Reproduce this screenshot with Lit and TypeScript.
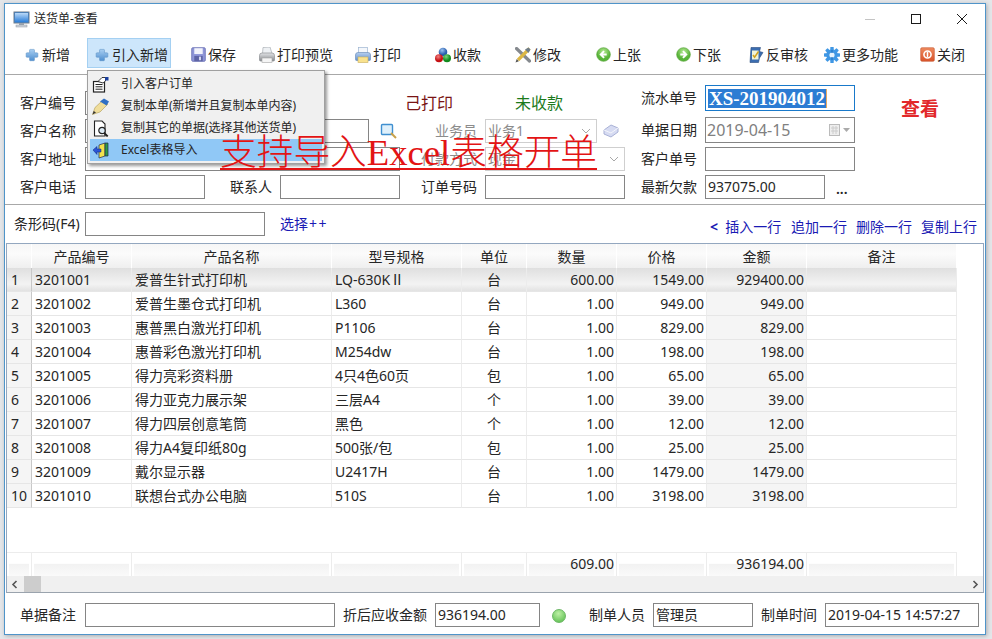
import { LitElement, html, css, svg } from "lit";
import { customElement } from "lit/decorators.js";

const plus = svg`<path d="M5 .8h4a.8.8 0 0 1 .8.8V4.700h3a.9.9 0 0 1 .9.9v3.300a.9.9 0 0 1-.9.9h-3v3.100a.8.8 0 0 1-.8.8H5a.8.8 0 0 1-.8-.8V9.800h-3a.9.9 0 0 1-.9-.9V5.600a.9.9 0 0 1 .9-.9h3V1.600a.8.8 0 0 1 .8-.8z" fill="url(#gb)" stroke="#5b8fc4" stroke-width=".6" transform="translate(1 .8)"/>`;
const icons: Record<string, unknown> = {
  plus,
  save: svg`<rect x=".8" y=".8" width="14.400" height="14.400" rx="1" fill="#8f96d8" stroke="#6f76b8"/><rect x="3.500" y="1.300" width="9" height="6.200" fill="#f2f3fb"/><rect x="3.500" y="9.500" width="9" height="5.700" fill="#5e64a6"/><rect x="8.500" y="10.300" width="2.200" height="3.800" fill="#d5d8f0"/>`,
  preview: svg`<path d="M4 .5l7-.5 2 6.500H3.500z" fill="#eef1f4" stroke="#a8adb3" stroke-width=".7"/><path d="M.5 8.500q0-2.500 2.500-2.500h10q2.500 0 2.500 2.500v4.500q0 1-1 1h-13q-1 0-1-1z" fill="url(#gg)" stroke="#8c8f93" stroke-width=".7"/><rect x="3" y="11" width="10" height="4.500" fill="#f5f5f5" stroke="#a3a3a3" stroke-width=".6"/>`,
  print: svg`<rect x="3.500" y=".5" width="9" height="6.500" fill="#f4f7fb" stroke="#9db4d0" stroke-width=".7"/><path d="M.5 8q0-2.500 2.500-2.500h10q2.500 0 2.500 2.500v4.500q0 1-1 1h-13q-1 0-1-1z" fill="url(#gp)" stroke="#6f90bd" stroke-width=".7"/><rect x="3" y="10" width="10" height="5.500" fill="#f9e28e" stroke="#c9ae5a" stroke-width=".6"/>`,
  balls: svg`<circle cx="8" cy="5" r="4.300" fill="url(#bb)"/><circle cx="4" cy="11.300" r="4" fill="url(#br)"/><circle cx="12" cy="11.300" r="4" fill="url(#bg)"/>`,
  tools: svg`<path d="M1.500 1.500l13 12.500" stroke="#85898e" stroke-width="3.200" stroke-linecap="round"/><path d="M14.500 1.500L3 13" stroke="#dcb744" stroke-width="3.200"/><path d="M.5 15.500l1.200-3.400 2.200 2.200z" fill="#555"/><path d="M10 2.500l3.500-2 2 2-2 3.500z" fill="#6f7d88"/>`,
  up: svg`<circle cx="8" cy="8" r="7.300" fill="url(#gc)" stroke="#5aa53c" stroke-width=".7"/><path d="M8.600 4.300L5 8l3.600 3.700M5.400 8h6" fill="none" stroke="#fff" stroke-width="2"/>`,
  down: svg`<circle cx="8" cy="8" r="7.300" fill="url(#gc)" stroke="#5aa53c" stroke-width=".7"/><path d="M7.400 4.300L11 8l-3.600 3.700M10.600 8h-6" fill="none" stroke="#fff" stroke-width="2"/>`,
  audit: svg`<path d="M3 .5h9.500l-1 4 3.500 1-3.500 5.500-1 4.500H2z" fill="#3b6db0" stroke="#27497e" stroke-width=".6"/><rect x="4" y="3.500" width="6.500" height="9" fill="#f1f4d8"/><path d="M5 8l1.600 2.200L10.500 4.500" fill="none" stroke="#d2a21e" stroke-width="1.500"/>`,
  gear: svg`<g fill="#3f97e4"><circle cx="8" cy="8" r="5.800"/><rect x="6.300" y="0" width="3.400" height="16" rx=".6"/><rect x="0" y="6.300" width="16" height="3.400" rx=".6"/><rect x="6.300" y="0" width="3.400" height="16" rx=".6" transform="rotate(45 8 8)"/><rect x="6.300" y="0" width="3.400" height="16" rx=".6" transform="rotate(-45 8 8)"/></g><circle cx="8" cy="8" r="2.600" fill="#e6f3fd"/><path d="M8 3v3M8 10v3" stroke="#1d6fbd" stroke-width="1"/>`,
  close: svg`<rect x=".7" y=".7" width="14.600" height="14.600" rx="1.500" fill="url(#go)" stroke="#c4552e" stroke-width=".6"/><circle cx="8" cy="8" r="3.800" fill="none" stroke="#fff" stroke-width="1.700"/><rect x="7.200" y="5" width="1.600" height="6" rx=".8" fill="#fff"/>`,
};
const defs = svg`<defs>
<linearGradient id="gb" x1="0" y1="0" x2="0" y2="1"><stop offset="0" stop-color="#a9cff2"/><stop offset="1" stop-color="#4f8fd0"/></linearGradient>
<linearGradient id="gg" x1="0" y1="0" x2="0" y2="1"><stop offset="0" stop-color="#e2e4e6"/><stop offset="1" stop-color="#85888c"/></linearGradient>
<linearGradient id="gp" x1="0" y1="0" x2="0" y2="1"><stop offset="0" stop-color="#b8d0ef"/><stop offset="1" stop-color="#5f8fcf"/></linearGradient>
<radialGradient id="bb" cx=".4" cy=".3"><stop offset="0" stop-color="#9cc2f0"/><stop offset="1" stop-color="#2a5fae"/></radialGradient>
<radialGradient id="br" cx=".4" cy=".3"><stop offset="0" stop-color="#f08080"/><stop offset="1" stop-color="#c40f12"/></radialGradient>
<radialGradient id="bg" cx=".4" cy=".3"><stop offset="0" stop-color="#7fd67f"/><stop offset="1" stop-color="#128a1e"/></radialGradient>
<radialGradient id="gc" cx=".5" cy=".3"><stop offset="0" stop-color="#b5ea93"/><stop offset="1" stop-color="#57b338"/></radialGradient>
<linearGradient id="go" x1="0" y1="0" x2="0" y2="1"><stop offset="0" stop-color="#ee8a5e"/><stop offset="1" stop-color="#d9532a"/></linearGradient>
<linearGradient id="ml" x1="0" y1="0" x2="0" y2="1"><stop offset="0" stop-color="#b9d8f8"/><stop offset="1" stop-color="#2d7fd8"/></linearGradient>
</defs>`;

const tools = [
  { t: "新增", i: "plus", w: 71, sz: 14 },
  { t: "引入新增", i: "plus", w: 84, m: 11, hot: true, sz: 14 },
  { t: "保存", i: "save", w: 69, sz: 15 },
  { t: "打印预览", i: "preview", w: 96, sz: 16 },
  { t: "打印", i: "print", w: 80, sz: 16 },
  { t: "收款", i: "balls", w: 80, sz: 16 },
  { t: "修改", i: "tools", w: 80, sz: 16 },
  { t: "上张", i: "up", w: 80, sz: 15 },
  { t: "下张", i: "down", w: 73, sz: 15 },
  { t: "反审核", i: "audit", w: 76, sz: 16 },
  { t: "更多功能", i: "gear", w: 95, sz: 16 },
  { t: "关闭", i: "close", w: 60, sz: 15 },
];
const cols = ["产品编号", "产品名称", "型号规格", "单位", "数量", "价格", "金额", "备注"];
const rows = [
  ["3201001", "爱普生针式打印机", "LQ-630KⅡ", "台", "600.00", "1549.00", "929400.00"],
  ["3201002", "爱普生墨仓式打印机", "L360", "台", "1.00", "949.00", "949.00"],
  ["3201003", "惠普黑白激光打印机", "P1106", "台", "1.00", "829.00", "829.00"],
  ["3201004", "惠普彩色激光打印机", "M254dw", "台", "1.00", "198.00", "198.00"],
  ["3201005", "得力亮彩资料册", "4只4色60页", "包", "1.00", "65.00", "65.00"],
  ["3201006", "得力亚克力展示架", "三层A4", "个", "1.00", "39.00", "39.00"],
  ["3201007", "得力四层创意笔筒", "黑色", "个", "1.00", "12.00", "12.00"],
  ["3201008", "得力A4复印纸80g", "500张/包", "包", "1.00", "25.00", "25.00"],
  ["3201009", "戴尔显示器", "U2417H", "台", "1.00", "1479.00", "1479.00"],
  ["3201010", "联想台式办公电脑", "510S", "台", "1.00", "3198.00", "3198.00"],
];
const menu = [
  { t: "引入客户订单", ic: svg`<rect x="1.500" y="5.500" width="11" height="10.500" fill="#fff" stroke="#222" stroke-width="1.200"/><path d="M3.500 8.500h7M3.500 10.800h7M3.500 13.200h7" stroke="#222"/><path d="M6 5.500l4-4h5l-2 4-2 1.500z" fill="#fff" stroke="#222" stroke-width=".9"/><rect x="13" y="1" width="3.500" height="3.500" fill="#1a3f9c"/>` },
  { t: "复制本单(新增并且复制本单内容)", ic: svg`<path d="M.5 16.500l2.500-7L11 2l5 4-8 8z" fill="#f0dd9a" stroke="#a08a3c" stroke-width=".5"/><path d="M8 3.500l4-3 5 3-2.500 4z" fill="#2f6fc4"/><path d="M.5 16.500l1.200-3.500 2.300 1.500z" fill="#333"/>` },
  { t: "复制其它的单据(选择其他送货单)", ic: svg`<path d="M2.500 1h7.500l3 3v12H2.500z" fill="#fff" stroke="#222" stroke-width="1.100"/><circle cx="10" cy="10.500" r="3.200" fill="#dceaf5" stroke="#222" stroke-width="1.200"/><path d="M12.200 13l3.500 3.500" stroke="#222" stroke-width="1.800"/>` },
  { t: "Excel表格导入", hot: true, ic: svg`<path d="M7 3l6-2v13l-6 2z" fill="#f2e24e" stroke="#1c2a50" stroke-width=".7"/><path d="M13 1h3v13h-3z" fill="#2f9a46" stroke="#1c2a50" stroke-width=".7"/><path d="M1 8l4-3.500V7h4v3H5v2.500z" fill="#2a55d8" stroke="#10206c" stroke-width=".5"/>` },
];

@customElement("app-root")
export class AppRoot extends LitElement {
  static styles = css`
    :host { display: block; position: relative; width: 992px; height: 639px; overflow: hidden; background: #e4e6e9; box-sizing: border-box; padding: 3px 6px 4px 4px; font: 14px/20px "Noto Sans", "Noto Sans CJK SC", sans-serif; color: #262626; }
    * { box-sizing: border-box; }
    .win { height: 632px; background: #fff; border: 1px solid #4f94c9; box-shadow: 1px 1px 4px rgba(0,0,0,.25); display: flex; flex-direction: column; }
    .title { height: 30px; display: flex; align-items: center; padding-left: 8px; font-size: 12px; gap: 4px; flex: none; }
    .title span { flex: 1; }
    .wbtn { width: 46px; height: 30px; display: flex; align-items: center; justify-content: center; }
    .wbtns { display: flex; }
    .toolbar { height: 41px; flex: none; display: flex; padding: 4px 0 0 11px; border-bottom: 1px solid #a8a8a8; align-items: flex-start; }
    .tb { height: 30px; display: flex; align-items: center; padding: 3px 0 0 7px; gap: 2px; white-space: nowrap; border: 1px solid transparent; flex: none; }
    .tb.hot { background: #cde6fb; border-color: #a4d0f2; padding-left: 6px; }
    .tb .ic { width: 16px; display: flex; justify-content: center; }
    .tb .ic svg { display: block; }
    .form { height: 130px; flex: none; display: flex; border-bottom: 1px solid #a8a8a8; }
    .left { width: 620px; flex: none; display: grid; grid-template-columns: 65px 120px 75px 120px 85px 112px 28px; grid-auto-rows: 24px; row-gap: 4px; padding: 16px 0 0 15px; align-content: start; }
    .lab { line-height: 24px; white-space: nowrap; }
    .r { text-align: right; padding-right: 8px; }
    .grey { color: #8c8c8c; }
    .ipt { border: 1px solid #858585; background: #fff; height: 24px; line-height: 22px; padding-left: 2px; white-space: nowrap; overflow: hidden; }
    .span3 { grid-column: span 3; }
    .span2 { grid-column: span 2; }
    .stat { font-size: 16px; line-height: 24px; white-space: nowrap; }
    .printed { color: #7a1414; padding-left: 5px; }
    .unpaid { color: #1b7a1b; padding-left: 30px; }
    .name { display: flex; justify-content: space-between; }
    .name .ipt { width: 284px; }
    .name .sic { width: 30px; display: flex; align-items: center; padding-left: 10px; }
    .combo { border: 1px solid #cfcfcf; height: 24px; color: #8c8c8c; line-height: 22px; padding-left: 2px; display: flex; justify-content: space-between; align-items: center; }
    .combo svg { margin-right: 5px; }
    .cell-ic { display: flex; align-items: center; padding-left: 6px; }
    .right { flex: none; width: 230px; margin-left: 16px; padding-top: 10px; display: flex; flex-direction: column; }
    .rrow { display: flex; height: 24px; margin-top: 4px; }
    .rrow:first-child { margin-top: 0; height: 26px; }
    .rrow.date { margin-top: 6px; height: 26px; }
    .rrow .lab { width: 64px; flex: none; }
    .rrow.tall .lab { line-height: 26px; }
    .rrow .ipt { width: 150px; height: 100%; }
    .sel { border-color: #1979ca; padding-left: 2px; display: flex; align-items: center; }
    .sel b { font: bold 19px/19px "Liberation Serif", serif; background: #2c7cd3; color: #fff; border-right: 1px solid #e8a860; padding: 0 1px; }
    .dt { font-size: 16px; color: #808080; display: flex; justify-content: space-between; align-items: center; padding-left: 1px; }
    .dots { margin-left: 11px; line-height: 28px; font-weight: 600; }
    .view { font: bold 19px/24px "Liberation Serif", "Noto Sans CJK SC", serif; color: #e2282a; padding-top: 23px; margin-left: 30px; white-space: nowrap; }
    .bar { height: 38px; flex: none; display: flex; align-items: center; padding: 0 8px 0 9px; }
    .bar .bl { width: 71px; white-space: nowrap; }
    .bar .ipt { width: 180px; }
    .link { color: #1a1ab4; white-space: nowrap; }
    .sel-link { margin-left: 15px; flex: 1; }
    .sel-link i { font-style: normal; letter-spacing: 1.500px; margin-left: 1px; }
    .acts { display: flex; padding-top: 6px; }
    .table { flex: none; margin: 0 1px; height: 350px; border: 1px solid #93a7bf; border-bottom-color: #9aa3ad; display: flex; flex-direction: column; overflow: hidden; }
    .grid-row { display: grid; grid-template-columns: 25px 100px 200px 130px 65px 90px 90px 100px 150px; width: 950px; flex: none; }
    .hd { height: 24px; }
    .hd div { background: linear-gradient(#f6f6f6 0, #fbfbfb 40%, #eeeeee 100%); border-right: 1px solid #fff; border-bottom: 2px solid #dcdcdc; text-align: center; line-height: 25px; }
    .row { height: 24px; }
    .row div { border-right: 1px solid #ececec; border-bottom: 1px solid #e6e6e6; line-height: 24px; padding: 0 3px; white-space: nowrap; overflow: hidden; font-size: 14px; }
    .row .no { background: #f5f5f5; border-right-color: #c8c8c8; padding: 0 0 0 4px; }
    .row .amt { background: #f5f5f5; }
    .row .c { text-align: center; }
    .row .n { text-align: right; padding-right: 2px; }
    .row.cur div { background: linear-gradient(#dfdfdf, #f3f3f3 70%, #e2e2e2); }
    .gap { height: 44px; flex: none; }
    .ft { height: 24px; }
    .ft div { border-right: 1px solid #ececec; border-top: 1px solid #ececec; background: linear-gradient(#fff 0, #fff 45%, #f2f2f2 50%, #fafafa 100%); box-shadow: inset 2px 0 #fff, inset -2px 0 #fff; text-align: right; padding-right: 2px; line-height: 22px; }
    .scroll { height: 16px; flex: none; background: #f0f0f0; display: flex; align-items: center; justify-content: space-between; padding: 0 4px; }
    .thumb { width: 17px; height: 16px; background: #cdcdcd; margin-left: 6px; margin-right: auto; }
    .bottom { flex: 1; display: flex; align-items: flex-start; padding: 10px 0 0 15px; }
    .bottom .lab { white-space: nowrap; }
    .bottom .ipt { flex: none; }
    .led { width: 14px; height: 14px; border-radius: 50%; background: radial-gradient(circle at 45% 30%, #bdf0a6, #52b946); border: 1px solid #6cb765; margin: 6px 23px 0 12px; flex: none; }
    .menu { position: absolute; left: 87px; top: 70px; width: 238px; height: 94px; background: #f0f0f0; border: 1px solid #a0a0a0; padding: 2px; box-shadow: 2px 2px 3px rgba(0,0,0,.4); font-size: 12px; z-index: 2; }
    .mi { height: 22px; display: flex; align-items: center; white-space: nowrap; line-height: 22px; padding-left: 2px; }
    .mi svg { margin-right: 12px; flex: none; }
    .mi.hot { background: #90c8f6; }
    .big { position: absolute; left: 220px; top: 131px; font: 36.700px/44px "Liberation Serif", "Noto Sans CJK SC", serif; color: #e31414; white-space: nowrap; text-decoration: underline; text-decoration-thickness: 2px; text-underline-offset: 3px; z-index: 3; font-weight: 300; }
  `;

  render() {
    const chev = html`<svg width="10" height="6" viewBox="0 0 10 6"><path d="M1 1l4 4 4-4" fill="none" stroke="#a8a8a8"/></svg>`;
    return html`
      <svg width="0" height="0" style="position:absolute">${defs}</svg>
      <div class="win">
        <div class="title">
          <svg width="17" height="17" viewBox="0 0 17 17"><rect x="1" y="1" width="15" height="11" fill="#2f86e2" stroke="#6f7a88"/><rect x="2" y="2" width="13" height="9" fill="url(#ml)"/><rect x="6" y="12" width="5" height="2" fill="#9aa3ae"/><rect x="3" y="14" width="11" height="2" fill="#cfd4da" stroke="#8f97a2" stroke-width=".5"/></svg>
          <span>送货单-查看</span>
          <div class="wbtns">
            <div class="wbtn"><svg width="12" height="12" viewBox="0 0 12 12"><path d="M1 6.500h10" stroke="#c4c4c4"/></svg></div>
            <div class="wbtn"><svg width="12" height="12" viewBox="0 0 12 12"><rect x="1.500" y="1.500" width="9" height="9" fill="none" stroke="#1a1a1a"/></svg></div>
            <div class="wbtn"><svg width="12" height="12" viewBox="0 0 12 12"><path d="M1 1l10 10M11 1L1 11" stroke="#1a1a1a"/></svg></div>
          </div>
        </div>
        <div class="toolbar">
          ${tools.map(
            (t) => html`<div class="tb ${t.hot ? "hot" : ""}" style="width:${t.w}px;margin-right:${t.m ?? 0}px">
              <span class="ic"><svg width=${t.sz} height=${t.sz} viewBox="0 0 16 16">${icons[t.i]}</svg></span>${t.t}
            </div>`
          )}
        </div>
        <div class="form">
          <div class="left">
            <div class="lab">客户编号</div><div class="ipt"></div><div></div><div></div>
            <div class="stat printed">己打印</div><div class="stat unpaid">未收款</div><div></div>

            <div class="lab">客户名称</div>
            <div class="span3 name"><div class="ipt"></div><div class="sic"><svg width="17" height="16" viewBox="0 0 17 16"><rect x="1.500" y="1.500" width="11" height="10" rx="1" fill="#dff0fb" stroke="#3f8fd0" stroke-width="1.400"/><path d="M11 10l5 5" stroke="#c9a24a" stroke-width="2"/></svg></div></div>
            <div class="lab r grey">业务员</div><div class="combo">业务1${chev}</div>
            <div class="cell-ic"><svg width="16" height="14" viewBox="0 0 16 14"><path d="M1 6l7-5 7 3v4l-7 5-7-3z" fill="#d6dbf2" stroke="#aab2d6"/><path d="M1 6l7 3 7-5" fill="none" stroke="#f4f5fb"/></svg></div>

            <div class="lab">客户地址</div><div class="ipt span3"></div>
            <div class="lab r grey">付款方式</div><div class="combo span2">现金${chev}</div>

            <div class="lab">客户电话</div><div class="ipt"></div>
            <div class="lab r">联系人</div><div class="ipt"></div>
            <div class="lab r">订单号码</div><div class="ipt span2"></div>
          </div>
          <div class="right">
            <div class="rrow tall"><div class="lab">流水单号</div><div class="ipt sel"><b>XS-201904012</b></div></div>
            <div class="rrow date tall"><div class="lab">单据日期</div><div class="ipt dt">2019-04-15<svg width="26" height="14" viewBox="0 0 26 14"><rect x="1.500" y="1.500" width="10" height="11" fill="#eee" stroke="#bbb"/><path d="M3 5h7M3 8h7M5 3v8M8 3v8" stroke="#ccc"/><path d="M15 5h7l-3.500 4z" fill="#aaa"/></svg></div></div>
            <div class="rrow"><div class="lab">客户单号</div><div class="ipt"></div></div>
            <div class="rrow"><div class="lab">最新欠款</div><div class="ipt" style="width:120px">937075.00</div><div class="dots">...</div></div>
          </div>
          <div class="view">查看</div>
        </div>
        <div class="bar">
          <div class="bl">条形码(F4)</div><div class="ipt"></div>
          <div class="link sel-link">选择<i>++</i></div>
          <div class="acts link">
            <span style="width:81px"><b>&lt;</b>&nbsp; 插入一行</span><span style="width:65px">追加一行</span><span style="width:65px">删除一行</span><span>复制上行</span>
          </div>
        </div>
        <div class="table">
          <div class="grid-row hd"><div></div>${cols.map((c) => html`<div>${c}</div>`)}</div>
          ${rows.map(
            (r, i) => html`<div class="grid-row row ${i === 0 ? "cur" : ""}">
              <div class="no">${i + 1}</div>
              <div>${r[0]}</div><div>${r[1]}</div><div>${r[2]}</div>
              <div class="c">${r[3]}</div><div class="n">${r[4]}</div><div class="n">${r[5]}</div>
              <div class="n amt">${r[6]}</div><div></div>
            </div>`
          )}
          <div class="gap"></div>
          <div class="grid-row ft"><div></div><div></div><div></div><div></div><div></div><div>609.00</div><div></div><div>936194.00</div><div></div></div>
          <div class="scroll">
            <svg width="7" height="9" viewBox="0 0 7 9"><path d="M5.500 1L2 4.500l3.500 3.500" fill="none" stroke="#555" stroke-width="1.600"/></svg>
            <div class="thumb"></div>
            <svg width="7" height="9" viewBox="0 0 7 9"><path d="M1.500 1L5 4.500 1.500 8" fill="none" stroke="#555" stroke-width="1.600"/></svg>
          </div>
        </div>
        <div class="bottom">
          <div class="lab" style="width:65px">单据备注</div>
          <div class="ipt" style="width:250px"></div>
          <div class="lab" style="margin:0 8px">折后应收金额</div>
          <div class="ipt" style="width:105px">936194.00</div>
          <div class="led"></div>
          <div class="lab" style="width:64px">制单人员</div>
          <div class="ipt" style="width:100px">管理员</div>
          <div class="lab" style="margin:0 8px">制单时间</div>
          <div class="ipt" style="width:154px">2019-04-15 14:57:27</div>
        </div>
      </div>
      <div class="menu">
        ${menu.map(
          (m) => html`<div class="mi ${m.hot ? "hot" : ""}"><svg width="17" height="17" viewBox="0 0 17 17">${m.ic}</svg>${m.t}</div>`
        )}
      </div>
      <div class="big">支持导入Excel表格开单</div>
    `;
  }
}
